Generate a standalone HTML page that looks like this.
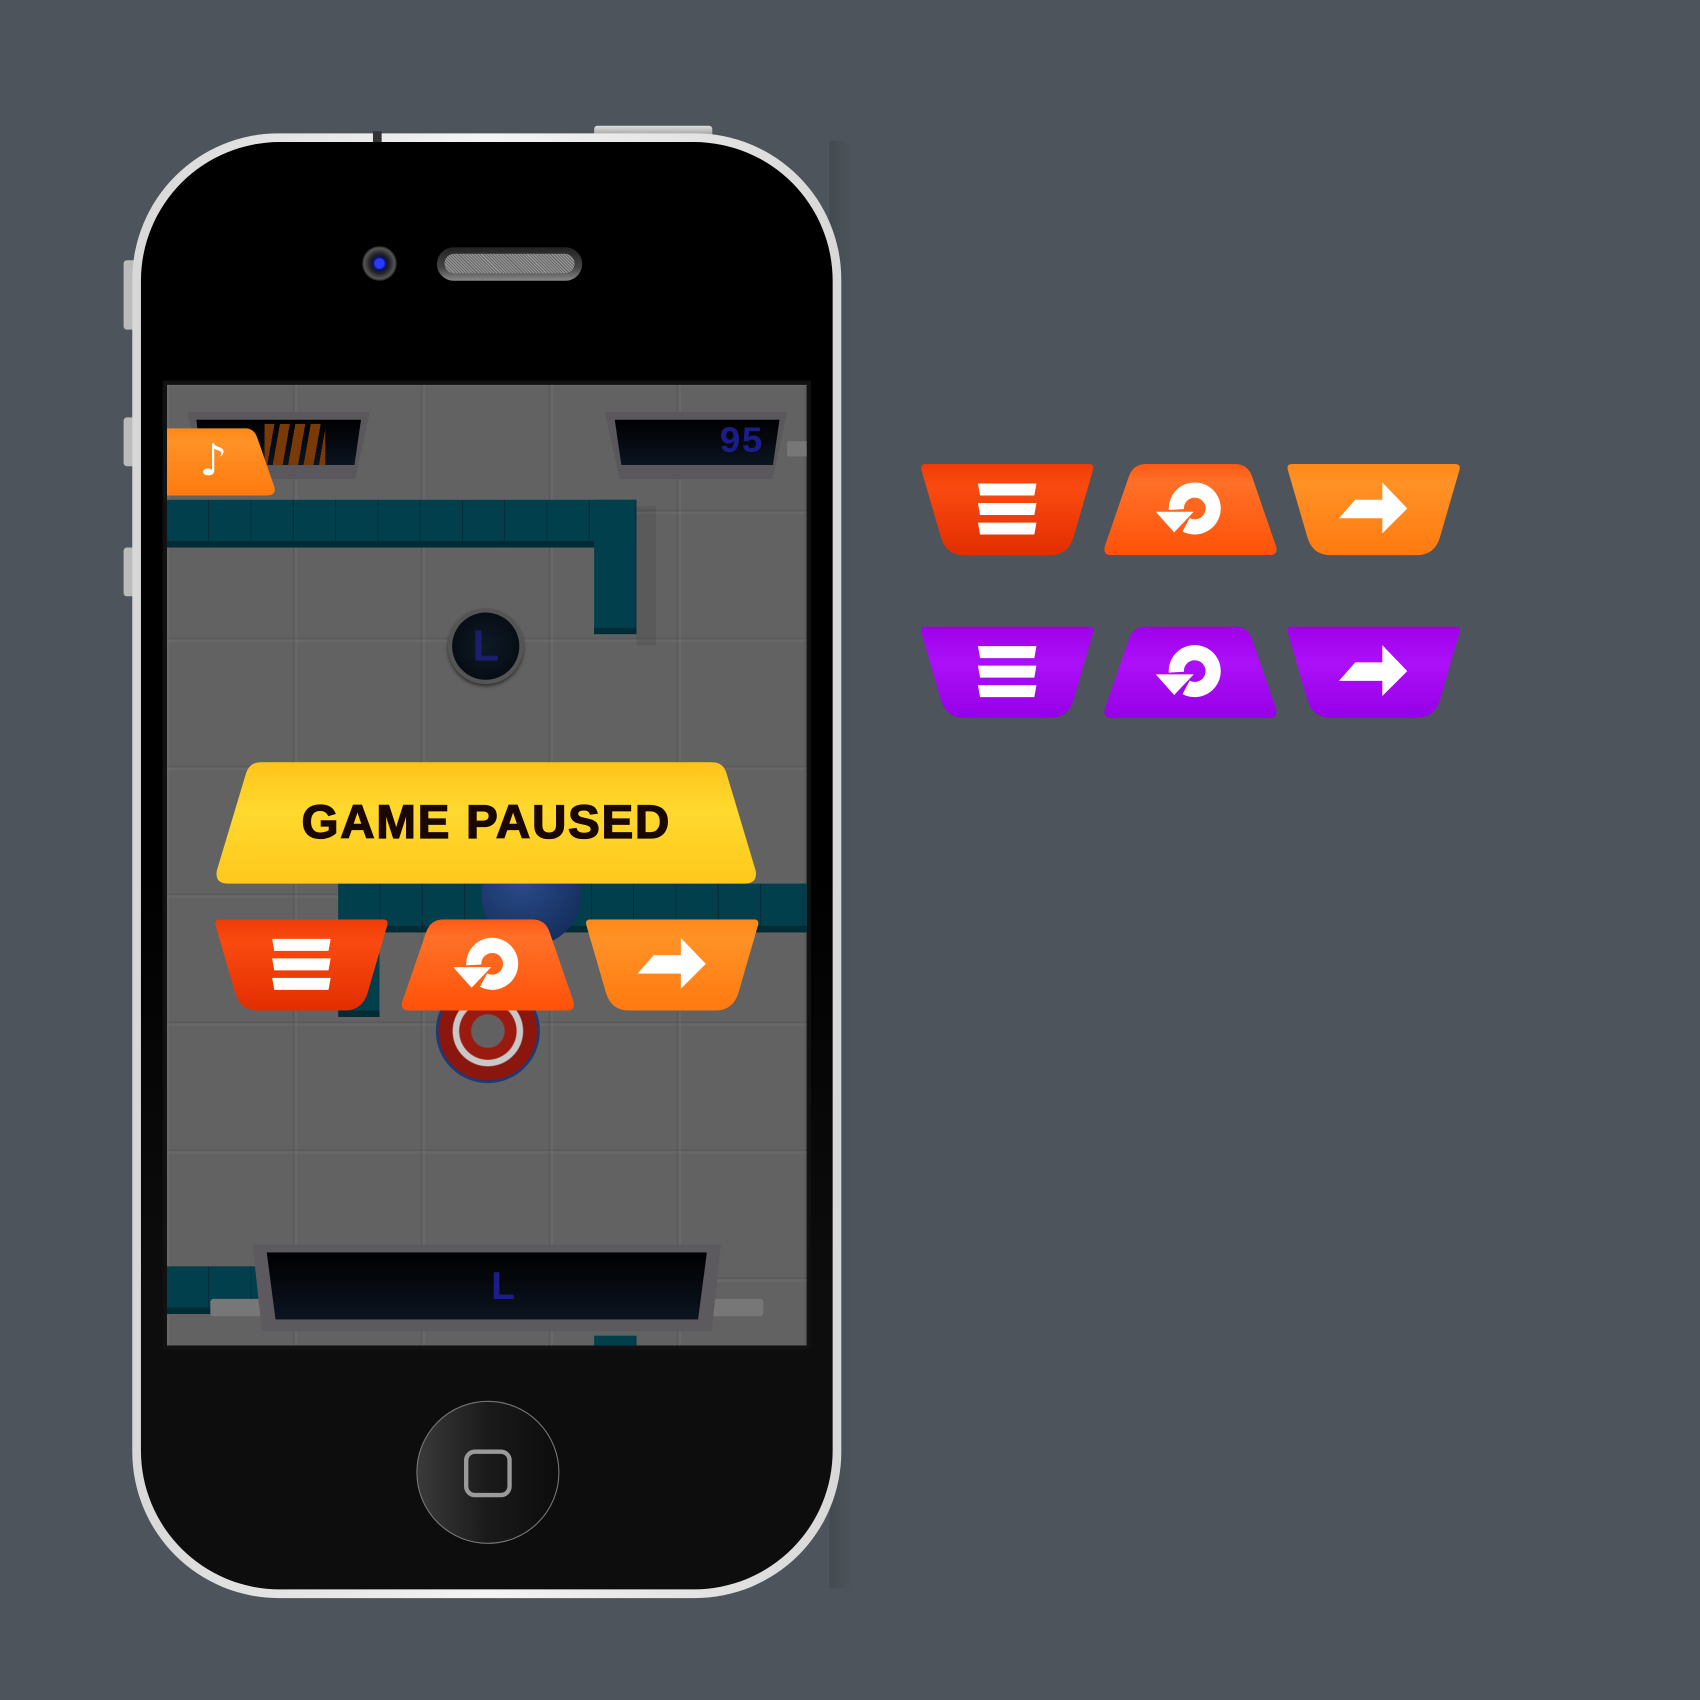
<!DOCTYPE html>
<html><head><meta charset="utf-8"><style>
html,body{margin:0;padding:0;width:1700px;height:1700px;overflow:hidden;background:#4d545b;}
#w{position:absolute;left:0;top:0;width:1568px;height:1568px;transform:scale(1.08418);transform-origin:0 0;font-family:"Liberation Sans",sans-serif;}
.a{position:absolute;}
.wall{position:absolute;background:#023f4d;box-shadow:inset 0 -6px 0 #012c36;background-image:repeating-linear-gradient(90deg,rgba(0,0,0,0) 0 38px,rgba(0,0,0,.25) 38px 39px);}
</style></head><body><div id="w">
<svg width="0" height="0" style="position:absolute">
<defs>
<linearGradient id="gr" x1="0" y1="0" x2="0" y2="1"><stop offset="0" stop-color="#ef3c08"/><stop offset=".25" stop-color="#fb4a10"/><stop offset="1" stop-color="#e22e00"/></linearGradient>
<linearGradient id="go" x1="0" y1="0" x2="0" y2="1"><stop offset="0" stop-color="#ff5a14"/><stop offset=".2" stop-color="#ff7028"/><stop offset="1" stop-color="#ff5208"/></linearGradient>
<linearGradient id="gy" x1="0" y1="0" x2="0" y2="1"><stop offset="0" stop-color="#ff8818"/><stop offset=".2" stop-color="#ff9226"/><stop offset="1" stop-color="#ff7a10"/></linearGradient>
<linearGradient id="gp" x1="0" y1="0" x2="0" y2="1"><stop offset="0" stop-color="#9e00ea"/><stop offset=".4" stop-color="#ac10f8"/><stop offset="1" stop-color="#9600e6"/></linearGradient>
<linearGradient id="gb" x1="0" y1="0" x2="0" y2="1"><stop offset="0" stop-color="#ffc41c"/><stop offset=".4" stop-color="#ffd92e"/><stop offset="1" stop-color="#ffc81c"/></linearGradient>
<path id="inv" d="M6,0 H156 Q162,0 160,6 L142,68 Q137,84 121,84 H41 Q25,84 20,68 L2,6 Q0,0 6,0 Z"/>
<path id="trp" d="M40,0 H122 Q134,0 138,12 L160,76 Q162,84 154,84 H8 Q0,84 2,76 L24,12 Q28,0 40,0 Z"/>
<g id="ham" fill="#fff"><polygon points="54,18 108,18 106,29 56,29"/><polygon points="54,36 108,36 106,47 56,47"/><polygon points="54,54 108,54 106,65 56,65"/></g>
<g id="rst" fill="#fff"><path d="M68,42 A17,17 0 1 1 77,56" fill="none" stroke="#fff" stroke-width="14"/><polygon points="49,44 84,44 66,63"/></g>
<polygon id="arr" fill="#fff" points="64,33 89,33 89,17 112,41 89,64 89,50 49,50"/>
</defs></svg>

<div class="a" style="left:548px;top:116px;width:109px;height:10px;background:linear-gradient(#ddd,#999);border-radius:3px 3px 0 0"></div>
<div class="a" style="left:114px;top:240px;width:10px;height:64px;background:#bbb;border-radius:3px 0 0 3px"></div>
<div class="a" style="left:114px;top:385px;width:10px;height:45px;background:#bbb;border-radius:3px 0 0 3px"></div>
<div class="a" style="left:114px;top:505px;width:10px;height:45px;background:#bbb;border-radius:3px 0 0 3px"></div>
<div class="a" style="left:765px;top:130px;width:20px;height:1335px;background:linear-gradient(90deg,rgba(0,0,0,.12),rgba(0,0,0,0))"></div>
<div class="a" style="left:122px;top:123px;width:654px;height:1351px;border-radius:135px;background:linear-gradient(90deg,#d8d8d8,#f4f4f4 50%,#d8d8d8)"></div>
<div class="a" style="left:130px;top:131px;width:638px;height:1335px;border-radius:128px;background:linear-gradient(#000 0,#000 50%,#0d0d0d 80%);"></div>
<div class="a" style="left:344px;top:121px;width:8px;height:10px;background:#333"></div>
<div class="a" style="left:334px;top:227px;width:32px;height:32px;border-radius:50%;background:radial-gradient(circle,#2a3aff 0 4px,#0a1060 6px,#222 9px,#555 14px,#222 16px)"></div>
<div class="a" style="left:403px;top:228px;width:134px;height:31px;border-radius:16px;background:linear-gradient(#222,#444 60%,#888);"></div>
<div class="a" style="left:410px;top:234px;width:120px;height:18px;border-radius:9px;background:repeating-linear-gradient(45deg,#999 0 1px,#666 1px 2px);"></div>
<div class="a" style="left:150px;top:351px;width:598px;height:894px;background:#111"></div>
<div class="a" style="left:154px;top:355px;width:590px;height:886px;overflow:hidden;background-color:#626262;background-image:linear-gradient(90deg,rgba(0,0,0,.07) 0 2px,rgba(255,255,255,.04) 2px 4px,transparent 4px),linear-gradient(rgba(0,0,0,.07) 0 2px,rgba(255,255,255,.04) 2px 4px,transparent 4px);background-size:118px 118px;background-position:-2px -3px;">
  <div class="wall" style="left:0;top:106px;width:433px;height:44px"></div>
  <div class="wall" style="left:394px;top:106px;width:39px;height:124px"></div>
  <div class="a" style="left:433px;top:112px;width:18px;height:128px;background:rgba(0,0,0,.08)"></div>
  <div class="wall" style="left:158px;top:460px;width:440px;height:45px"></div>
  <div class="wall" style="left:158px;top:505px;width:38px;height:78px"></div>
  <div class="wall" style="left:0;top:813px;width:86px;height:44px"></div>
  <div class="wall" style="left:394px;top:877px;width:39px;height:20px"></div>
  <div class="a" style="left:259px;top:206px;width:70px;height:70px;border-radius:50%;background:#555;box-shadow:0 2px 3px rgba(0,0,0,.5)"></div>
  <div class="a" style="left:263px;top:210px;width:62px;height:62px;border-radius:50%;background:radial-gradient(#0e1a28,#05080c);color:#1c1e70;font:bold 40px/62px 'Liberation Sans',sans-serif;text-align:center">L</div>
  <div class="a" style="left:290px;top:425px;width:92px;height:92px;border-radius:50%;background:radial-gradient(circle at 40% 35%,#2a4c8a,#0f2550)"></div>
  <div class="a" style="left:248px;top:548px;width:96px;height:96px;border-radius:50%;background:radial-gradient(circle,#616161 0 15px,#9a1a10 16px 26px,#c8c8c8 27px 32px,#8a160e 33px 45px,#1a3a7a 46px)"></div>
  <div class="a" style="left:19px;top:25px;width:168px;height:62px;background:#5a585c;clip-path:polygon(0 0,100% 0,92% 100%,8% 100%)"></div>
  <div class="a" style="left:27px;top:32px;width:152px;height:42px;background:linear-gradient(#000,#0b1420);clip-path:polygon(0 0,100% 0,96% 100%,4% 100%)"></div>
  <div class="a" style="left:90px;top:36px;width:56px;height:38px;background:repeating-linear-gradient(100deg,#7a3a08 0 9px,transparent 9px 14px)"></div>
  <div class="a" style="left:404px;top:25px;width:168px;height:62px;background:#5a585c;clip-path:polygon(0 0,100% 0,92% 100%,8% 100%)"></div>
  <div class="a" style="left:413px;top:32px;width:152px;height:42px;background:linear-gradient(#000,#0b1420);clip-path:polygon(0 0,100% 0,96% 100%,4% 100%)"></div>
  <div class="a" style="left:490px;top:34px;width:60px;font:bold 34px/40px 'Liberation Mono',monospace;color:#1d1d8a;text-align:right">95</div>
  <div class="a" style="left:572px;top:52px;width:20px;height:14px;background:#777"></div>
  <svg class="a" style="left:0;top:40px" width="100" height="62"><path d="M0,0 H72 Q80,0 83,8 L99,54 Q101,62 92,62 H0 Z" fill="url(#gy)"/></svg>
  <div class="a" style="left:30px;top:48px;font:bold 40px/44px 'DejaVu Sans',sans-serif;color:#fff">♪</div>
  <div class="a" style="left:40px;top:843px;width:50px;height:16px;background:#777;border-radius:3px"></div>
  <div class="a" style="left:500px;top:843px;width:50px;height:16px;background:#777;border-radius:3px"></div>
  <div class="a" style="left:79px;top:793px;width:432px;height:80px;background:#5d5a5f;clip-path:polygon(0 0,100% 0,98% 100%,2% 100%);"></div>
  <div class="a" style="left:92px;top:800px;width:406px;height:62px;background:linear-gradient(#000,#0b1420);clip-path:polygon(0 0,100% 0,98% 100%,2% 100%);color:#1d1d8a;font:bold 36px/62px 'Liberation Sans',sans-serif;text-align:center;text-indent:30px">L</div>
  <svg class="a" style="left:45px;top:348px" width="500" height="113"><path d="M42,0 H457 Q468,0 471,10 L498,100 Q500,112 488,112 H11 Q-1,112 1,100 L28,10 Q31,0 42,0Z" fill="url(#gb)"/></svg>
  <div class="a" style="left:45px;top:348px;width:499px;height:112px;color:#1a0800;font:900 44px/112px 'Liberation Sans',sans-serif;text-align:center;letter-spacing:1.5px;-webkit-text-stroke:1.2px #1a0800">GAME PAUSED</div>
  <svg class="a" style="left:43px;top:493px" width="162" height="85"><use href="#inv" fill="url(#gr)"/><use href="#ham"/></svg>
  <svg class="a" style="left:215px;top:493px" width="162" height="85"><use href="#trp" fill="url(#go)"/><use href="#rst"/></svg>
  <svg class="a" style="left:385px;top:493px" width="162" height="85"><use href="#inv" fill="url(#gy)"/><use href="#arr"/></svg>
</div>
<div class="a" style="left:384px;top:1292px;width:132px;height:132px;border-radius:50%;background:linear-gradient(90deg,#3a3a3a,#1a1a1a 50%,#0c0c0c);border:1px solid #777;box-sizing:border-box"></div>
<div class="a" style="left:428px;top:1337px;width:44px;height:44px;border:4px solid #9a9a9a;border-radius:10px;box-sizing:border-box"></div>

<svg class="a" style="left:848px;top:428px" width="162" height="85"><use href="#inv" fill="url(#gr)"/><use href="#ham"/></svg>
<svg class="a" style="left:1017px;top:428px" width="162" height="85"><use href="#trp" fill="url(#go)"/><use href="#rst"/></svg>
<svg class="a" style="left:1186px;top:428px" width="162" height="85"><use href="#inv" fill="url(#gy)"/><use href="#arr"/></svg>
<svg class="a" style="left:848px;top:578px" width="162" height="85"><use href="#inv" fill="url(#gp)"/><use href="#ham"/></svg>
<svg class="a" style="left:1017px;top:578px" width="162" height="85"><use href="#trp" fill="url(#gp)"/><use href="#rst"/></svg>
<svg class="a" style="left:1186px;top:578px" width="162" height="85"><use href="#inv" fill="url(#gp)"/><use href="#arr"/></svg>
</div></body></html>
